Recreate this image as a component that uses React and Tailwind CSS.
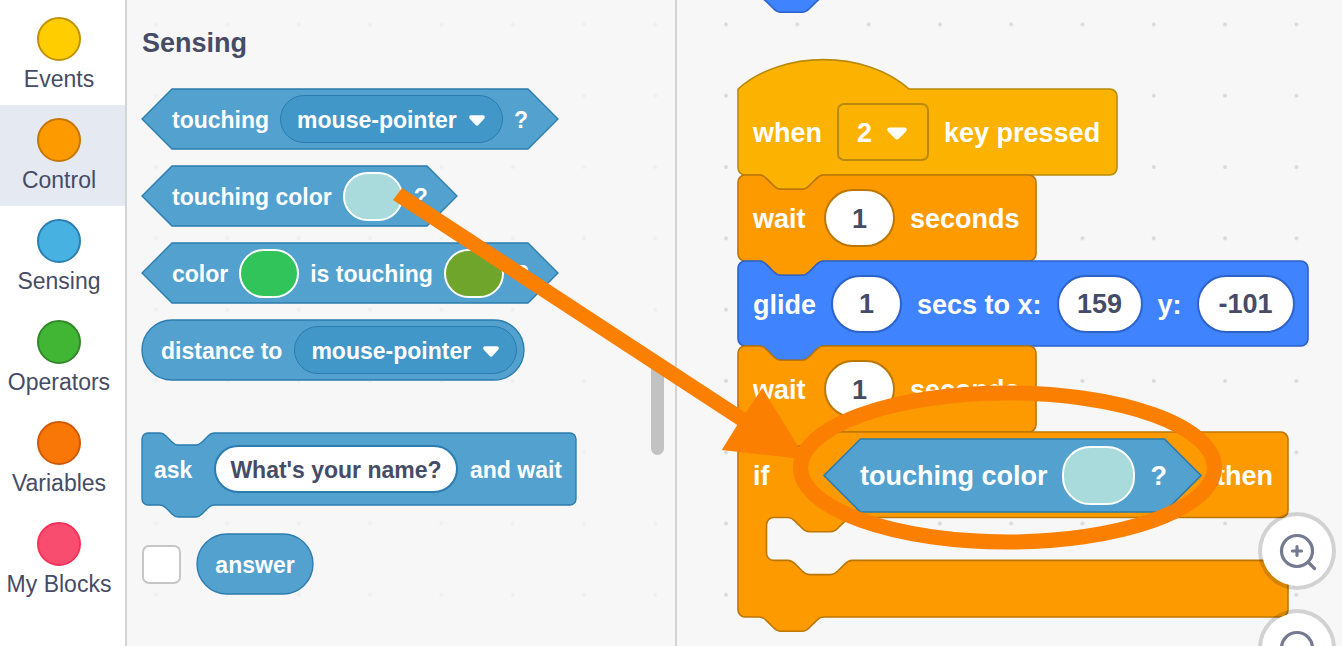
import React from 'react';

const categories = [
  { name: 'Events', dot: 'bg-[#ffcd00] border-[#c19100]' },
  { name: 'Control', dot: 'bg-[#fc9a00] border-[#c57700]', active: true },
  { name: 'Sensing', dot: 'bg-[#47b2e1] border-[#2b7fb2]' },
  { name: 'Operators', dot: 'bg-[#41b534] border-[#33892a]' },
  { name: 'Variables', dot: 'bg-[#f97706] border-[#cf5a05]' },
  { name: 'My Blocks', dot: 'bg-[#f84d6f] border-[#f83258]' },
];

const paint = {
  events: { fill: '#fcb200', stroke: '#b98a0a' },
  control: { fill: '#fc9a00', stroke: '#bd7700' },
  motion: { fill: '#4083ff', stroke: '#2c62cb' },
  sensing: { fill: '#52a1cf', stroke: '#2b7caf' },
};

const notchRight = 'c2,0 3,1 4,2 l4,4 c1,1 2,2 4,2 h12 c2,0 3,-1 4,-2 l4,-4 c1,-1 2,-2 4,-2';
const notchLeft = 'c-2,0 -3,1 -4,2 l-4,4 c-1,1 -2,2 -4,2 h-12 c-2,0 -3,-1 -4,-2 l-4,-4 c-1,-1 -2,-2 -4,-2';

const topEdge = `M0,4 a4,4 0 0,1 4,-4 h8 ${notchRight}`;
const bottomEdge = (w, h) =>
  `V${h - 4} a4,4 0 0,1 -4,4 H48 ${notchLeft} H4 a4,4 0 0,1 -4,-4 z`;

const outlines = {
  stack: (w, h) => `${topEdge} H${w - 4} a4,4 0 0,1 4,4 ${bottomEdge(w, h)}`,
  hat: (w, h) => `M0,0 c25,-22 71,-22 96,0 H${w - 4} a4,4 0 0,1 4,4 ${bottomEdge(w, h)}`,
  mouth: (w, h) =>
    `${topEdge} H${w - 4} a4,4 0 0,1 4,4 V44 a4,4 0 0,1 -4,4 H64 ${notchLeft} h-8 a4,4 0 0,0 -4,4 v16 a4,4 0 0,0 4,4 h8 ${notchRight} H${w - 4} a4,4 0 0,1 4,4 ${bottomEdge(w, h)}`,
  hex: (w, h) => `M${h / 2},0 H${w - h / 2} L${w},${h / 2} L${w - h / 2},${h} H${h / 2} L0,${h / 2} z`,
  round: (w, h) => `M${h / 2},0 H${w - h / 2} a${h / 2},${h / 2} 0 0,1 0,${h} H${h / 2} a${h / 2},${h / 2} 0 0,1 0,-${h} z`,
};

function Outline({ kind, shape, w, h, scale }) {
  const { fill, stroke } = paint[kind];
  return (
    <svg className="absolute inset-0 h-full w-full overflow-visible" aria-hidden="true">
      <path
        transform={`scale(${scale})`}
        d={outlines[shape](w / scale, h / scale)}
        fill={fill}
        stroke={stroke}
        strokeWidth="0.9"
      />
    </svg>
  );
}

function Block({ className, children, ...outline }) {
  return (
    <div className={`relative shrink-0 ${className}`}>
      <Outline {...outline} />
      <div className="relative flex h-full items-center">{children}</div>
    </div>
  );
}

function Row({ className, children }) {
  return (
    <div className={`flex items-center whitespace-nowrap [&>span]:pt-[3px] ${className}`}>{children}</div>
  );
}

function Caret({ className }) {
  return (
    <svg viewBox="0 0 20 13" preserveAspectRatio="none" className={`pointer-events-none absolute ${className}`} aria-hidden="true">
      <path
        d="M2.6,0.4 H17.4 C19.8,0.4 20.4,2.6 19,4.4 L12,11.6 Q10,13.6 8,11.6 L1,4.4 C-0.4,2.6 0.2,0.4 2.6,0.4 z"
        fill="#fff"
      />
    </svg>
  );
}

function TargetSelect({ label }) {
  return (
    <div className="relative h-12 w-[223px] shrink-0">
      <select
        aria-label={label}
        className="h-full w-full appearance-none rounded-full border border-[#2b7caf] bg-[#4197c8] pt-[3px] pl-4 font-bold text-white"
      >
        <option>mouse-pointer</option>
      </select>
      <Caret className="top-5 right-[18px] h-[11px] w-4" />
    </div>
  );
}

function Swatch({ label, className }) {
  return <button type="button" aria-label={label} className={`shrink-0 rounded-[28px] border-2 border-white ${className}`} />;
}

function NumberField({ label, value, className }) {
  return (
    <input
      type="text"
      aria-label={label}
      defaultValue={value}
      className={`h-[58px] shrink-0 rounded-[29px] border-2 bg-white pt-0.5 text-center font-bold text-[#464c66] ${className}`}
    />
  );
}

function Dots({ id, x, color }) {
  return (
    <svg className="absolute inset-0 h-full w-full" aria-hidden="true">
      <defs>
        <pattern id={id} x={x} y="-11.2" width="71.3" height="71.3" patternUnits="userSpaceOnUse">
          <circle cx="35.6" cy="35.6" r="2" fill={color} />
        </pattern>
      </defs>
      <rect width="100%" height="100%" fill={`url(#${id})`} />
    </svg>
  );
}

function Categories() {
  return (
    <nav className="w-[127px] shrink-0 border-r-2 border-[#d4d4d4] bg-white pt-1">
      {categories.map((c) => (
        <button
          key={c.name}
          type="button"
          className={`flex w-full flex-col items-center gap-1 pt-[13px] pr-[7px] pb-3 whitespace-nowrap ${c.active ? 'bg-[#e5e9f1]' : ''}`}
        >
          <span className={`h-11 w-11 rounded-full border-2 ${c.dot}`} />
          <span className="text-[23px] leading-7">{c.name}</span>
        </button>
      ))}
    </nav>
  );
}

function Palette() {
  return (
    <section className="relative w-[550px] shrink-0 border-r-2 border-[#d4d4d4]">
      <Dots id="palette-dots" x="-6.4" color="#f0f0f0" />
      <div className="relative flex flex-col items-start gap-[17px] pt-[27px] pl-[15px] text-[23px] font-bold text-white">
        <h2 className="mb-[13px] text-[27px] leading-8 text-[#464c66]">Sensing</h2>

        <Block kind="sensing" shape="hex" w={416} h={60} scale={1.5} className="h-[60px] w-[416px]">
          <Row className="gap-[11px] pl-[30px]">
            <span>touching</span>
            <TargetSelect label="Touching target" />
            <span>?</span>
          </Row>
        </Block>

        <Block kind="sensing" shape="hex" w={315} h={60} scale={1.5} className="h-[60px] w-[315px]">
          <Row className="gap-[11px] pl-[30px]">
            <span>touching color</span>
            <Swatch label="Pick color" className="h-[49px] w-[60px] bg-[#a9dbdc]" />
            <span>?</span>
          </Row>
        </Block>

        <Block kind="sensing" shape="hex" w={416} h={60} scale={1.5} className="h-[60px] w-[416px]">
          <Row className="gap-[11px] pl-[30px]">
            <span>color</span>
            <Swatch label="Pick first color" className="h-[49px] w-[60px] bg-[#31c45b]" />
            <span>is touching</span>
            <Swatch label="Pick second color" className="h-[49px] w-[60px] bg-[#70a52b]" />
            <span>?</span>
          </Row>
        </Block>

        <Block kind="sensing" shape="round" w={382} h={60} scale={1.5} className="h-[60px] w-[382px]">
          <Row className="gap-3 pl-[19px]">
            <span>distance to</span>
            <TargetSelect label="Distance target" />
          </Row>
        </Block>

        <Block kind="sensing" shape="stack" w={434} h={72} scale={1.5} className="mt-9 h-[72px] w-[434px]">
          <Row className="gap-3 pl-3">
            <span className="min-w-12">ask</span>
            <input
              type="text"
              aria-label="Question"
              defaultValue="What's your name?"
              className="h-12 w-[244px] rounded-full border-2 border-[#2b7caf] bg-white pt-0.5 text-center font-bold text-[#464c66]"
            />
            <span>and wait</span>
          </Row>
        </Block>

        <div className="mt-3 flex items-center gap-4">
          <input
            type="checkbox"
            aria-label="Show answer"
            className="h-[39px] w-[39px] appearance-none rounded-[7px] border-2 border-[#c6c6c6] bg-white"
          />
          <Block kind="sensing" shape="round" w={116} h={60} scale={1.5} className="h-[60px] w-[116px]">
            <Row className="w-full justify-center">
              <span>answer</span>
            </Row>
          </Block>
        </div>
      </div>
      <div className="absolute top-[362px] right-[11px] h-[93px] w-[13px] rounded-full bg-[#c2c2c2]" />
    </section>
  );
}

function ZoomButton({ label, sign }) {
  return (
    <button
      type="button"
      aria-label={label}
      className="flex h-[78px] w-[78px] items-center justify-center rounded-full border-4 border-black/15 bg-white bg-clip-padding"
    >
      <svg viewBox="0 0 48 48" className="h-12 w-12" fill="none" stroke="#747a8f" strokeWidth="3.2" strokeLinecap="round" aria-hidden="true">
        <circle cx="24" cy="24" r="15.5" />
        <path d="M35.5,35.5 L41.5,41.5" />
        <path d={sign} />
      </svg>
    </button>
  );
}

function Workspace() {
  return (
    <main className="relative min-w-0 flex-1 overflow-hidden text-[27px] font-bold whitespace-nowrap text-white">
      <Dots id="workspace-dots" x="13.4" color="#d9d9d9" />

      <div className="absolute -top-[88px] left-[61px]">
        <Block kind="motion" shape="stack" w={300} h={86} scale={1.7825} className="h-[86px] w-[300px]" />
      </div>

      <div className="absolute top-[89px] left-[61px]">
        <Block kind="events" shape="hat" w={379} h={86} scale={1.7825} className="h-[86px] w-[379px]">
          <Row className="gap-[15px] pl-[15px]">
            <span>when</span>
            <div className="relative h-[58px] w-[92px]">
              <select
                aria-label="Key"
                className="h-full w-full appearance-none rounded-[7px] border-2 border-[#b98a0a] bg-[#fcb200] pt-0.5 pl-[18px] font-bold text-white"
              >
                <option>2</option>
              </select>
              <Caret className="top-6 right-[22px] h-[13px] w-5" />
            </div>
            <span>key pressed</span>
          </Row>
        </Block>

        <Block kind="control" shape="stack" w={298} h={86} scale={1.7825} className="h-[86px] w-[298px]">
          <Row className="gap-[15px] pl-[15px]">
            <span className="min-w-14">wait</span>
            <NumberField label="Wait seconds" value="1" className="w-[71px] border-[#bd7700]" />
            <span>seconds</span>
          </Row>
        </Block>

        <Block kind="motion" shape="stack" w={570} h={85} scale={1.7825} className="h-[85px] w-[570px]">
          <Row className="gap-[15px] pl-[15px]">
            <span className="min-w-14">glide</span>
            <NumberField label="Glide seconds" value="1" className="w-[71px] border-[#2c62cb]" />
            <span>secs to x:</span>
            <NumberField label="Glide x" value="159" className="w-[86px] border-[#2c62cb]" />
            <span>y:</span>
            <NumberField label="Glide y" value="-101" className="w-[98px] border-[#2c62cb]" />
          </Row>
        </Block>

        <Block kind="control" shape="stack" w={298} h={86} scale={1.7825} className="h-[86px] w-[298px]">
          <Row className="gap-[15px] pl-[15px]">
            <span className="min-w-14">wait</span>
            <NumberField label="Second wait seconds" value="1" className="w-[71px] border-[#bd7700]" />
            <span>seconds</span>
          </Row>
        </Block>

        <Block kind="control" shape="mouth" w={550} h={185} scale={1.7825} className="h-[185px] w-[550px]">
          <Row className="h-[86px] gap-[15px] self-start pl-[15px]">
            <span className="min-w-14">if</span>
            <Block kind="sensing" shape="hex" w={377} h={73} scale={1.7825} className="h-[73px] w-[377px]">
              <Row className="gap-[15px] pl-9">
                <span>touching color</span>
                <Swatch label="Condition color" className="h-[59px] w-[73px] bg-[#a9dbdc]" />
                <span>?</span>
              </Row>
            </Block>
            <span>then</span>
          </Row>
        </Block>
      </div>

      <div className="absolute top-[512px] right-[6px] flex flex-col gap-[19px]">
        <ZoomButton label="Zoom in" sign="M24,19.5 V28.5 M19.5,24 H28.5" />
        <ZoomButton label="Zoom out" sign="M19.5,24 H28.5" />
      </div>
    </main>
  );
}

function Annotation() {
  return (
    <svg className="pointer-events-none absolute inset-0 h-full w-full" fill="#fb7f00" aria-hidden="true">
      <path d="M402,188 L745.7,412.7 L762.3,388 L806,459.5 L721.7,450 L737.3,425 L393,200 z" />
      <ellipse cx="1007.5" cy="467.5" rx="207" ry="74.5" fill="none" stroke="#fb7f00" strokeWidth="15" />
    </svg>
  );
}

export default function App() {
  return (
    <div className="relative flex h-screen overflow-hidden bg-[#f7f7f7] font-['Liberation_Sans',Arial,sans-serif] text-[#464c66]">
      <Categories />
      <Palette />
      <Workspace />
      <Annotation />
    </div>
  );
}
